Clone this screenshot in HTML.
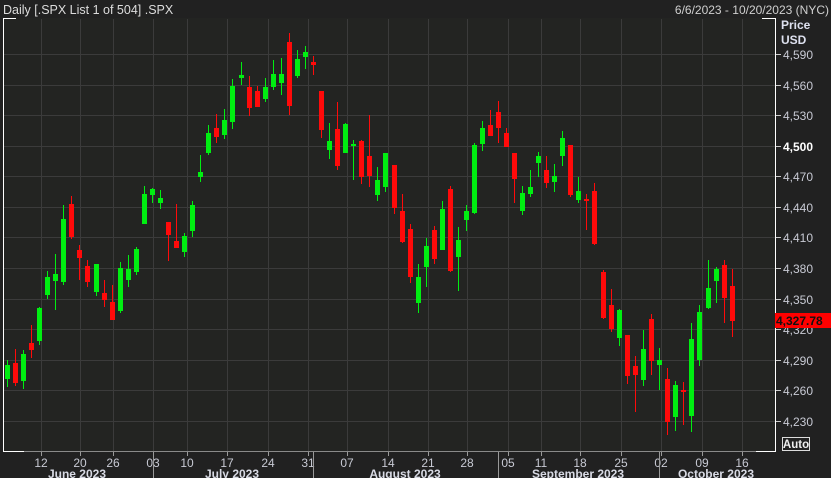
<!DOCTYPE html>
<html><head><meta charset="utf-8"><style>
html,body{margin:0;padding:0;background:#212121;width:831px;height:478px;overflow:hidden}
svg{display:block}
text{font-family:"Liberation Sans Narrow","Liberation Sans",sans-serif}
</style></head><body>
<svg width="831" height="478" viewBox="0 0 831 478" xmlns="http://www.w3.org/2000/svg">
<rect width="831" height="478" fill="#212121"/>
<rect x="3" y="18" width="772" height="433" fill="#232422"/>
<text x="3" y="14" font-size="12.5" fill="#dcdcdc">Daily [.SPX List 1 of 504] .SPX</text>
<text x="829" y="14" font-size="12" fill="#cfcfcf" text-anchor="end">6/6/2023 - 10/20/2023 (NYC)</text>
<g id="grid" stroke="#3b3b3b" stroke-width="1"></g>
<g id="candles"></g>
<g id="axis"></g>
<line x1="3.5" y1="18" x2="3.5" y2="451" stroke="#fff"/>
<line x1="775.5" y1="18" x2="775.5" y2="451" stroke="#fff"/>
<line x1="3" y1="18.5" x2="16" y2="18.5" stroke="#fff"/>
<line x1="762" y1="18.5" x2="776" y2="18.5" stroke="#fff"/>
<line x1="3" y1="451.5" x2="776" y2="451.5" stroke="#8a8a8a"/>
<line x1="3" y1="451.5" x2="24" y2="451.5" stroke="#fff"/>
<line x1="756" y1="451.5" x2="776" y2="451.5" stroke="#fff"/>
<text x="781" y="29" font-size="12" font-weight="bold" fill="#dde0ee">Price</text>
<text x="781" y="44" font-size="12" font-weight="bold" fill="#dde0ee">USD</text>
<rect x="775" y="313" width="56" height="15" fill="#ff0000"/>
<text x="776" y="325" font-size="12" font-weight="bold" fill="#111">4,327.78</text>
<rect x="782.5" y="437.5" width="27" height="13" fill="none" stroke="#ddd"/>
<text x="796" y="448" font-size="11.5" font-weight="bold" fill="#eee" text-anchor="middle">Auto</text>
</svg>
<script>
const NS="http://www.w3.org/2000/svg";
function el(p,t,a,txt){const e=document.createElementNS(NS,t);for(const k in a)e.setAttribute(k,a[k]);if(txt)e.textContent=txt;p.appendChild(e);return e;}
const grid=document.getElementById('grid'),ax=document.getElementById('axis'),cg=document.getElementById('candles');
const prices=[4590,4560,4530,4500,4470,4440,4410,4380,4350,4320,4290,4260,4230];
prices.forEach((p,i)=>{const y=Math.round(54+(4590-p)*1.0194)+0.5;
 el(grid,'line',{x1:4,y1:y,x2:775,y2:y});
 el(ax,'line',{x1:776,y1:y,x2:781,y2:y,stroke:'#ccc'});
 el(ax,'text',{x:783,y:y+4.5,'font-size':12,fill:p==4500?'#fff':'#c8cad4','font-weight':p==4500?'bold':'normal'},p.toLocaleString('en-US'));
});
const days=[[41,'12'],[80,'20'],[113,'26'],[153,'03'],[187,'10'],[227,'17'],[268,'24'],[308,'31'],[347,'07'],[388,'14'],[428,'21'],[467,'28'],[508,'05'],[541,'11'],[580,'18'],[621,'25'],[661,'02'],[702,'09'],[742,'16']];
days.forEach(([x,t])=>{el(grid,'line',{x1:x+0.5,y1:19,x2:x+0.5,y2:451});
 el(ax,'line',{x1:x+0.5,y1:452,x2:x+0.5,y2:456,stroke:'#999'});
 el(ax,'text',{x:x,y:467,'font-size':12,fill:'#c8cad4','text-anchor':'middle'},t);});
[153,313,498,659].forEach(x=>el(ax,'line',{x1:x+0.5,y1:452,x2:x+0.5,y2:478,stroke:'#999'}));
[[77,'June 2023'],[232,'July 2023'],[405,'August 2023'],[578,'September 2023'],[716,'October 2023']].forEach(([x,t])=>el(ax,'text',{x:x,y:478,'font-size':12,'font-weight':'bold',fill:'#d8dae4','text-anchor':'middle'},t));
const C=[
[7,360,365,379,387,'G'],[15,349,363,383,386,'R'],[23,350,354,381,389,'G'],[31,325,343,350,358,'R'],[39,307,308,341,345,'G'],[47,271,277,295,299,'G'],[55,254,274,281,310,'G'],[63,205,219,282,285,'G'],[71,196,204,237,239,'R'],[79,245,250,258,280,'R'],[87,260,266,282,287,'R'],[96,264,264,292,296,'G'],[104,280,293,300,307,'R'],[112,285,302,320,320,'R'],[120,262,268,311,313,'G'],[128,255,269,280,287,'G'],[136,247,249,272,275,'G'],[144,186,194,224,224,'G'],[152,188,189,195,203,'G'],[160,190,198,203,209,'G'],[168,222,222,235,261,'R'],[176,204,241,248,248,'R'],[184,233,236,252,257,'G'],[192,201,205,231,237,'G'],
[200,155,172,177,182,'G'],[208,125,133,153,155,'G'],[216,114,128,137,143,'R'],[224,109,120,135,139,'G'],[232,79,86,122,129,'G'],[241,62,75,78,85,'G'],[249,76,87,108,116,'R'],[257,86,91,107,107,'R'],[265,78,87,99,102,'G'],[273,60,74,87,90,'G'],[281,58,74,83,95,'G'],[289,33,42,106,115,'R'],[297,50,59,76,78,'G'],[305,46,52,57,69,'G'],[313,56,62,65,75,'R'],[321,91,91,130,138,'R'],[329,123,141,150,159,'G'],[337,102,129,166,170,'R'],[345,123,124,153,153,'G'],[353,140,144,146,180,'G'],[361,140,141,177,184,'R'],[369,115,156,176,187,'R'],[377,167,180,195,201,'G'],[385,153,153,187,192,'G'],
[394,165,165,208,214,'R'],[402,194,211,242,243,'R'],[410,224,229,277,283,'R'],[418,264,277,303,313,'G'],[426,238,246,267,287,'G'],[434,226,230,259,264,'R'],[442,201,209,250,250,'G'],[450,186,189,271,272,'R'],[458,227,240,257,291,'G'],[466,205,211,220,231,'G'],[474,143,145,213,214,'G'],[482,121,128,144,151,'G'],[490,110,125,136,136,'R'],[498,101,112,128,143,'R'],[506,128,133,147,147,'R'],[514,153,153,179,203,'R'],[522,186,193,211,215,'G'],[530,170,187,194,197,'G'],[538,152,156,163,177,'G'],[546,156,170,183,188,'R'],[554,164,176,182,192,'G'],[562,131,138,156,166,'G'],[570,145,145,195,197,'R'],[578,177,191,200,203,'G'],[586,194,199,201,230,'R'],[594,183,191,244,245,'R'],
[603,270,272,318,319,'R'],[611,289,305,329,332,'R'],[619,309,310,338,346,'G'],[627,335,335,376,384,'R'],[635,356,366,375,412,'R'],[643,330,349,380,386,'G'],[651,314,319,361,375,'R'],[659,348,360,365,390,'G'],[667,368,379,422,435,'R'],[675,381,385,417,431,'G'],[683,382,390,392,425,'R'],[691,323,339,416,432,'G'],[699,305,312,360,366,'G'],[708,260,288,308,309,'G'],[716,267,269,281,303,'G'],[724,260,265,298,323,'R'],[732,269,286,321,337,'R']];
C.forEach(([x,wt,bt,bb,wb,c])=>{const col=c=='G'?'#00ee11':'#ff0a0a';
 el(cg,'rect',{x:x,y:wt,width:1,height:wb-wt,fill:col});
 el(cg,'rect',{x:x-2,y:bt,width:5,height:Math.max(2,bb-bt),fill:col});});
</script>
</body></html>
